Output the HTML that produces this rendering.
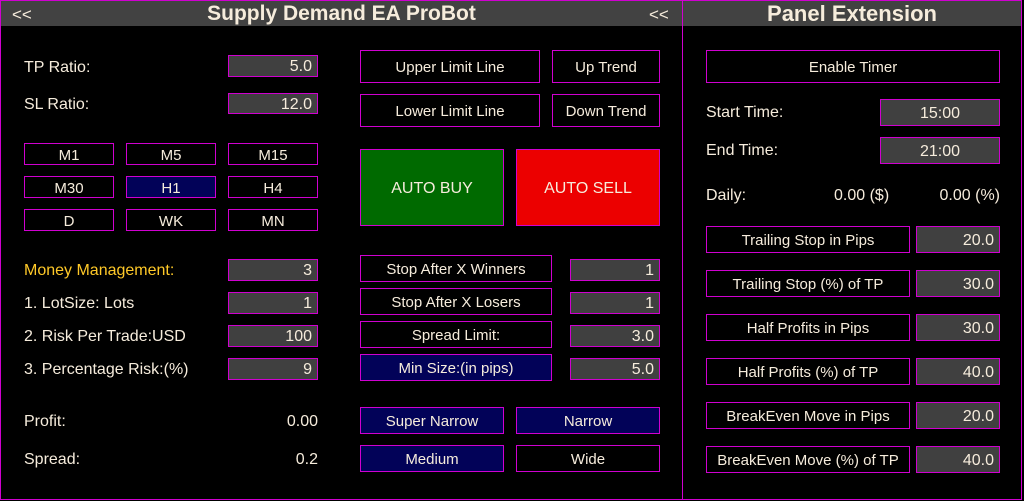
<!DOCTYPE html>
<html><head><style>
*{margin:0;padding:0;box-sizing:border-box}
body{width:1024px;height:501px;background:#000;position:relative;overflow:hidden;font-family:"Liberation Sans",sans-serif;font-size:15px;color:#f6ecdc}
.a{position:absolute}
.b{position:absolute;border:1px solid #d000d0;display:flex;align-items:center;justify-content:center;white-space:nowrap;padding-top:2px}
.v{position:absolute;border:1px solid #d000d0;background:#404040;display:flex;align-items:center;justify-content:flex-end;padding-right:5px;font-size:16px;padding-top:2px}
.vc{justify-content:center;padding-right:0}
.n{background:#020258}
.l{position:absolute;white-space:nowrap;transform:translateY(-44%);font-size:16px}
.hd{position:absolute;top:1px;height:25px;background:#424242;font-weight:bold;font-size:21px;display:flex;align-items:center;justify-content:center;padding-top:1px}
</style></head><body>
<div class="a" style="left:0;top:0;width:683px;height:500px;border:1px solid #d000d0"></div>
<div class="a" style="left:682px;top:0;width:340px;height:500px;border:1px solid #d000d0"></div>
<div class="hd" style="left:1px;width:681px">Supply Demand EA ProBot</div>
<div class="hd" style="left:683px;width:338px;font-size:22px">Panel Extension</div>
<div class="l" style="left:12px;top:14px;font-size:17px">&lt;&lt;</div>
<div class="l" style="left:649px;top:14px;font-size:17px">&lt;&lt;</div>

<div class="l" style="left:24px;top:67px">TP Ratio:</div>
<div class="v" style="left:228px;top:55px;width:90px;height:22px">5.0</div>
<div class="l" style="left:24px;top:104px">SL Ratio:</div>
<div class="v" style="left:228px;top:93px;width:90px;height:21px">12.0</div>

<div class="b" style="left:24px;top:143px;width:90px;height:22px">M1</div>
<div class="b" style="left:126px;top:143px;width:90px;height:22px">M5</div>
<div class="b" style="left:228px;top:143px;width:90px;height:22px">M15</div>
<div class="b" style="left:24px;top:176px;width:90px;height:22px">M30</div>
<div class="b n" style="left:126px;top:176px;width:90px;height:22px">H1</div>
<div class="b" style="left:228px;top:176px;width:90px;height:22px">H4</div>
<div class="b" style="left:24px;top:209px;width:90px;height:22px">D</div>
<div class="b" style="left:126px;top:209px;width:90px;height:22px">WK</div>
<div class="b" style="left:228px;top:209px;width:90px;height:22px">MN</div>

<div class="l" style="left:24px;top:270px;color:#ffc928">Money Management:</div>
<div class="v" style="left:228px;top:259px;width:90px;height:22px">3</div>
<div class="l" style="left:24px;top:303px">1. LotSize: Lots</div>
<div class="v" style="left:228px;top:292px;width:90px;height:22px">1</div>
<div class="l" style="left:24px;top:336px">2. Risk Per Trade:USD</div>
<div class="v" style="left:228px;top:325px;width:90px;height:22px">100</div>
<div class="l" style="left:24px;top:369px">3. Percentage Risk:(%)</div>
<div class="v" style="left:228px;top:358px;width:90px;height:22px">9</div>

<div class="l" style="left:24px;top:421px">Profit:</div>
<div class="l" style="right:706px;top:421px">0.00</div>
<div class="l" style="left:24px;top:459px">Spread:</div>
<div class="l" style="right:706px;top:459px">0.2</div>

<div class="b" style="left:360px;top:50px;width:180px;height:33px">Upper Limit Line</div>
<div class="b" style="left:552px;top:50px;width:108px;height:33px">Up Trend</div>
<div class="b" style="left:360px;top:94px;width:180px;height:33px">Lower Limit Line</div>
<div class="b" style="left:552px;top:94px;width:108px;height:33px">Down Trend</div>
<div class="b" style="left:360px;top:149px;width:144px;height:77px;background:#006a00;font-size:16px">AUTO BUY</div>
<div class="b" style="left:516px;top:149px;width:144px;height:77px;background:#ec0000;font-size:16px">AUTO SELL</div>

<div class="b" style="left:360px;top:255px;width:192px;height:27px">Stop After X Winners</div>
<div class="v" style="left:570px;top:259px;width:90px;height:22px">1</div>
<div class="b" style="left:360px;top:288px;width:192px;height:27px">Stop After X Losers</div>
<div class="v" style="left:570px;top:292px;width:90px;height:22px">1</div>
<div class="b" style="left:360px;top:321px;width:192px;height:27px">Spread Limit:</div>
<div class="v" style="left:570px;top:325px;width:90px;height:22px">3.0</div>
<div class="b n" style="left:360px;top:354px;width:192px;height:27px">Min Size:(in pips)</div>
<div class="v" style="left:570px;top:358px;width:90px;height:22px">5.0</div>

<div class="b n" style="left:360px;top:407px;width:144px;height:27px">Super Narrow</div>
<div class="b n" style="left:516px;top:407px;width:144px;height:27px">Narrow</div>
<div class="b n" style="left:360px;top:445px;width:144px;height:27px">Medium</div>
<div class="b" style="left:516px;top:445px;width:144px;height:27px">Wide</div>

<div class="b" style="left:706px;top:50px;width:294px;height:33px">Enable Timer</div>
<div class="l" style="left:706px;top:112px">Start Time:</div>
<div class="v vc" style="left:880px;top:99px;width:120px;height:27px">15:00</div>
<div class="l" style="left:706px;top:150px">End Time:</div>
<div class="v vc" style="left:880px;top:137px;width:120px;height:27px">21:00</div>
<div class="l" style="left:706px;top:195px">Daily:</div>
<div class="l" style="left:834px;top:195px">0.00 ($)</div>
<div class="l" style="right:24px;top:195px">0.00 (%)</div>

<div class="b" style="left:706px;top:226px;width:204px;height:27px">Trailing Stop in Pips</div>
<div class="v" style="left:916px;top:226px;width:84px;height:27px">20.0</div>
<div class="b" style="left:706px;top:270px;width:204px;height:27px">Trailing Stop (%) of TP</div>
<div class="v" style="left:916px;top:270px;width:84px;height:27px">30.0</div>
<div class="b" style="left:706px;top:314px;width:204px;height:27px">Half Profits in Pips</div>
<div class="v" style="left:916px;top:314px;width:84px;height:27px">30.0</div>
<div class="b" style="left:706px;top:358px;width:204px;height:27px">Half Profits (%) of TP</div>
<div class="v" style="left:916px;top:358px;width:84px;height:27px">40.0</div>
<div class="b" style="left:706px;top:402px;width:204px;height:27px">BreakEven Move in Pips</div>
<div class="v" style="left:916px;top:402px;width:84px;height:27px">20.0</div>
<div class="b" style="left:706px;top:446px;width:204px;height:27px">BreakEven Move (%) of TP</div>
<div class="v" style="left:916px;top:446px;width:84px;height:27px">40.0</div>
</body></html>
